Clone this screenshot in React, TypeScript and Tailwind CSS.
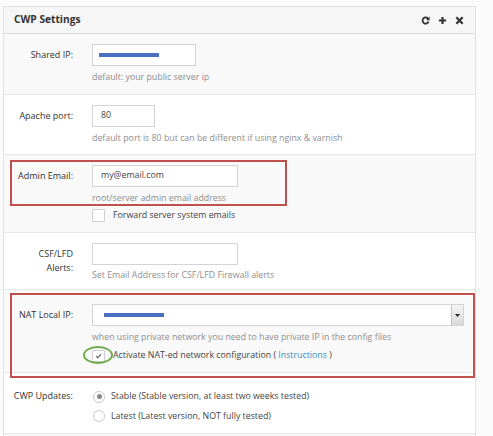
import React from "react";

const font = { fontFamily: '"Open Sans", "Liberation Sans", sans-serif' };

function Label({ children }: { children: React.ReactNode }) {
  return (
    <div className="w-[69px] shrink-0 text-right text-[9px] leading-[14px] text-[#333]">{children}</div>
  );
}

function Help({ children }: { children: React.ReactNode }) {
  return <div className="text-[8.8px] leading-[12px] text-[#8e8e8e]">{children}</div>;
}

export default function App() {
  return (
    <div className="w-[493px] h-[436px] overflow-hidden bg-[#fbfbfb] pt-[6px] pl-[3px]" style={font}>
      <div className="w-[473px] border border-[#e2e2e2] bg-white">
        <div className="h-[27px] flex items-center justify-between bg-[#f6f6f6] border-b border-[#dcdcdc] pl-[10px] pr-[11px]">
          <span className="text-[10.2px] font-bold text-[#333]">CWP Settings</span>
          <div className="flex items-center gap-[8px] text-[#333]">
            <svg width="9" height="9" viewBox="0 0 10 10">
              <path d="M8 3.2A3.4 3.4 0 1 0 8.4 6" fill="none" stroke="#333" strokeWidth="2" />
              <path d="M9.6 0.6 V4.6 H5.6 Z" fill="#333" />
            </svg>
            <svg width="9" height="9" viewBox="0 0 10 10">
              <path d="M5 1 V9 M1 5 H9" stroke="#333" strokeWidth="2.4" />
            </svg>
            <svg width="9" height="9" viewBox="0 0 10 10">
              <path d="M1.5 1.5 L8.5 8.5 M8.5 1.5 L1.5 8.5" stroke="#333" strokeWidth="2.4" />
            </svg>
          </div>
        </div>

        {/* Shared IP */}
        <div className="flex gap-[19px] bg-[#f9f9f9] border-b border-[#e6e6e6] pt-[10px] pb-[11px]">
          <Label><div className="pt-[4px]">Shared IP:</div></Label>
          <div className="flex flex-col gap-[5px]">
            <div className="w-[104px] h-[22px] border border-[#d4d4d4] bg-white flex items-center pl-[6px]">
              <div className="w-[60px] h-[4px] bg-[#4a70c2]" />
            </div>
            <Help>default: your public server ip</Help>
          </div>
        </div>

        {/* Apache port */}
        <div className="flex gap-[19px] bg-white border-b border-[#e6e6e6] pt-[10px] pb-[10px]">
          <Label><div className="pt-[4px]">Apache port:</div></Label>
          <div className="flex flex-col gap-[5px]">
            <div className="w-[63px] h-[22px] border border-[#d4d4d4] bg-white flex items-center pl-[8px] text-[8.8px] text-[#444]">80</div>
            <Help>default port is 80 but can be different if using nginx &amp; varnish</Help>
          </div>
        </div>

        {/* Admin Email */}
        <div className="relative flex gap-[19px] bg-[#f9f9f9] border-b border-[#e6e6e6] pt-[10px] pb-[10px]">
          <Label><div className="pt-[4px]">Admin Email:</div></Label>
          <div className="flex flex-col">
            <div className="w-[146px] h-[22px] border border-[#d4d4d4] bg-white flex items-center pl-[8px] text-[8.8px] text-[#444]">my@email.com</div>
            <div className="mt-[5px]"><Help>root/server admin email address</Help></div>
            <div className="mt-[5px] flex items-center gap-[8px]">
              <div className="w-[13px] h-[13px] border border-[#cfcfcf] bg-white rounded-[1px]" />
              <span className="text-[8.8px] text-[#444]">Forward server system emails</span>
            </div>
          </div>
          <div className="absolute left-[6px] top-[5px] w-[277px] h-[46px] border-2 border-[#c0504d]" />
        </div>

        {/* CSF/LFD */}
        <div className="flex gap-[19px] bg-white border-b border-[#e6e6e6] pt-[10px] pb-[8px]">
          <Label><div className="pt-[4px] leading-[14px]">CSF/LFD<br />Alerts:</div></Label>
          <div className="flex flex-col gap-[4px]">
            <div className="w-[146px] h-[22px] border border-[#d4d4d4] bg-white" />
            <Help>Set Email Address for CSF/LFD Firewall alerts</Help>
          </div>
        </div>

        {/* NAT */}
        <div className="relative flex gap-[19px] bg-[#f9f9f9] border-b border-[#e6e6e6] pt-[14px] pb-[10px]">
          <Label><div className="pt-[4px]">NAT Local IP:</div></Label>
          <div className="flex flex-col">
            <div className="w-[372px] h-[22px] border border-[#d4d4d4] bg-white flex items-center justify-between">
              <div className="ml-[11px] w-[60px] h-[4px] bg-[#4a70c2]" />
              <div className="w-[12px] h-[21px] border-l border-[#c4c4c4] bg-gradient-to-b from-[#f4f4f4] to-[#d8d8d8] flex items-center justify-center">
                <svg width="5" height="3" viewBox="0 0 5 3"><path d="M0 0 H5 L2.5 3 Z" fill="#222" /></svg>
              </div>
            </div>
            <div className="mt-[5px]"><Help>when using private network you need to have private IP in the config files</Help></div>
            <div className="mt-[6px] flex items-center gap-[8px] relative">
              <div className="w-[13px] h-[12px] border border-[#cfcfcf] bg-white rounded-[1px] flex items-center justify-center">
                <svg width="7" height="6" viewBox="0 0 7 6"><path d="M1 3 L2.8 4.8 L6 1.2" fill="none" stroke="#777" strokeWidth="1.3" /></svg>
              </div>
              <span className="text-[8.8px] text-[#444]">Activate NAT-ed network configuration ( <span className="text-[#3a8fc4]">Instructions</span> )</span>
              <div className="absolute left-[-9px] top-[-3px] w-[30px] h-[18px] rounded-[50%] border-2 border-[#71a94a]" />
            </div>
          </div>
          <div className="absolute left-[6px] top-[3px] w-[465px] h-[85px] border-2 border-[#c0504d]" />
        </div>

        {/* CWP Updates */}
        <div className="flex gap-[19px] bg-white border-b border-[#e6e6e6] pt-[16px] pb-[10px]">
          <Label><div className="leading-[14px]">CWP Updates:</div></Label>
          <div className="flex flex-col gap-[6px] pt-[1px]">
            <div className="flex items-center gap-[6px] ml-[1px]">
              <div className="w-[12px] h-[12px] rounded-full border border-[#c8c8c8] bg-white flex items-center justify-center">
                <div className="w-[5px] h-[5px] rounded-full bg-[#888]" />
              </div>
              <span className="text-[8.8px] text-[#444]">Stable (Stable version, at least two weeks tested)</span>
            </div>
            <div className="flex items-center gap-[6px] ml-[1px]">
              <div className="w-[12px] h-[12px] rounded-full border border-[#c8c8c8] bg-white" />
              <span className="text-[8.8px] text-[#444]">Latest (Latest version, NOT fully tested)</span>
            </div>
          </div>
        </div>
        <div className="h-[20px] bg-[#f9f9f9]" />
      </div>
    </div>
  );
}
